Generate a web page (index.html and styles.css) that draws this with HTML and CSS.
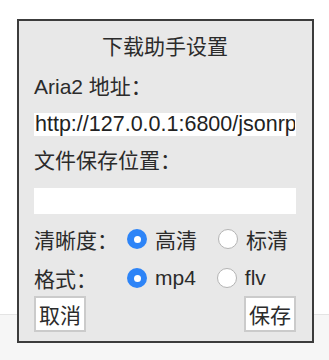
FILE: index.html
```html
<!DOCTYPE html>
<html lang="zh-CN">
<head>
  <meta charset="UTF-8">
  <title>下载助手设置</title>
  <link rel="stylesheet" href="styles.css">
</head>
<body>
  <div class="page">
    <div class="page-top"></div>
    <div class="page-bottom"></div>
  </div>
  <div class="dialog">
    <div class="title">下载助手设置</div>
    <label class="field-label" for="aria">Aria2 地址：</label>
    <input class="field" id="aria" type="text" value="http://127.0.0.1:6800/jsonrpc">
    <label class="field-label second" for="dir">文件保存位置：</label>
    <input class="field tall" id="dir" type="text" value="">
    <div class="row first-row">
      <span class="row-label">清晰度：</span>
      <label class="opt"><span class="radio checked"></span>高清</label>
      <label class="opt"><span class="radio"></span>标清</label>
    </div>
    <div class="row">
      <span class="row-label">格式：</span>
      <label class="opt"><span class="radio checked"></span>mp4</label>
      <label class="opt"><span class="radio"></span>flv</label>
    </div>
    <div class="buttons">
      <button class="btn">取消</button>
      <button class="btn">保存</button>
    </div>
  </div>
</body>
</html>
```
FILE: styles.css
```css
body {
  margin: 0;
  padding: 0;
  font-family: "Liberation Sans", "Noto Sans CJK SC", sans-serif;
  color: #2b2b2b;
  background: #fff;
}
.page {
  height: 360px;
  display: flex;
  flex-direction: column;
}
.page-top {
  height: 314px;
  background: #fff;
}
.page-bottom {
  flex: 1;
  background: #f6f6f6;
  border-top: 1px solid #e4e4e4;
}
/* dialog floats over the page */
.dialog {
  position: absolute;
  left: 17px;
  top: 19px;
  width: 262px;
  height: 320px;
  padding: 0 16px 0 15px;
  background: #e8e8e8;
  border: 2px solid #3c3c3c;
  display: flex;
  flex-direction: column;
  font-size: 21px;
}
.title {
  text-align: center;
  line-height: 30px;
  margin-top: 11px;
}
.field-label {
  display: block;
  line-height: 30px;
  margin-top: 10px;
}
.field {
  display: block;
  box-sizing: border-box;
  width: 262px;
  height: 23px;
  margin-top: 11px;
  padding: 0 1px;
  border: none;
  outline: none;
  background: #fff;
  font-family: "Liberation Sans", "Noto Sans CJK SC", sans-serif;
  font-size: 21.5px;
  color: #222;
}
.field.tall {
  height: 26px;
  margin-top: 12px;
}
.row {
  display: flex;
  align-items: center;
  height: 30px;
  margin-top: 9px;
  white-space: nowrap;
}
.row.first-row {
  margin-top: 10px;
}
.row-label {
  width: 93px;
  flex-shrink: 0;
}
.opt {
  display: flex;
  align-items: center;
  flex-shrink: 0;
  gap: 8px;
  margin-right: 21px;
}
.opt:last-child {
  margin-right: 0;
}
.radio {
  box-sizing: border-box;
  width: 20px;
  height: 20px;
  flex-shrink: 0;
  border-radius: 50%;
  border: 1px solid #b4b4b4;
  background: #fff;
  display: flex;
  align-items: center;
  justify-content: center;
}
.radio.checked {
  border: none;
  background: #2d84f7;
}
.radio.checked::after {
  content: "";
  width: 7px;
  height: 7px;
  border-radius: 50%;
  background: #fff;
}
.buttons {
  display: flex;
  justify-content: space-between;
  margin-top: 3px;
}
.btn {
  height: 36px;
  padding: 0 3px;
  background: #fff;
  border: 2px solid #cbcbcb;
  border-radius: 0;
  font-family: "Liberation Sans", "Noto Sans CJK SC", sans-serif;
  font-size: 21px;
  color: #2b2b2b;
}
```
